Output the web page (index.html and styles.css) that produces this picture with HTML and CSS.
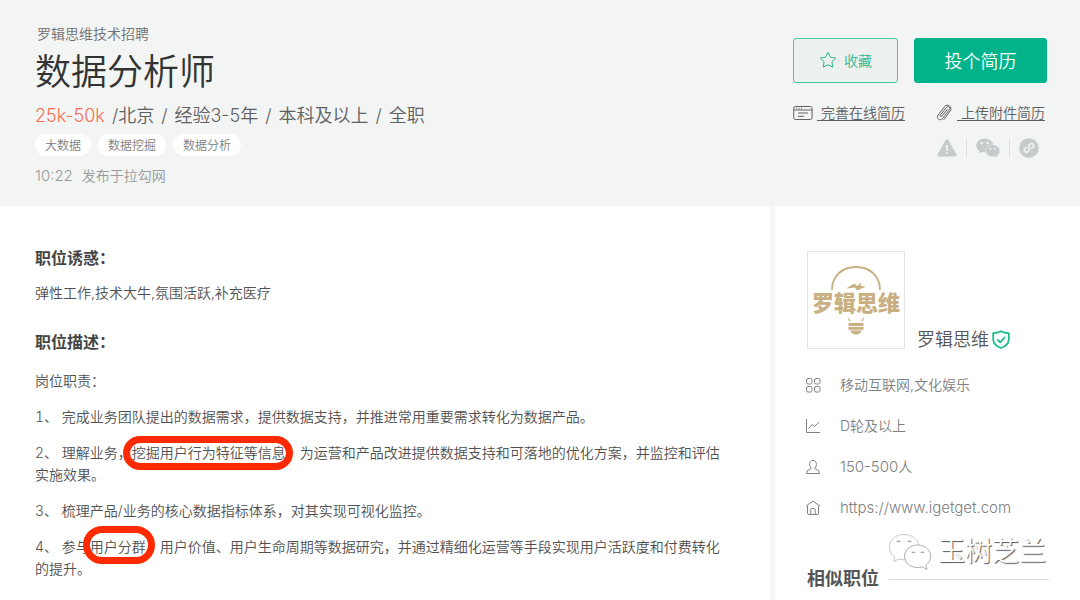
FILE: index.html
```html
<!DOCTYPE html>
<html lang="zh-CN">
<head>
<meta charset="utf-8">
<meta name="viewport" content="width=device-width, initial-scale=1">
<title>数据分析师</title>
<link rel="stylesheet" href="styles.css">
</head>
<body>
<header class="job-head">
  <div class="job-info">
    <div class="team">罗辑思维技术招聘</div>
    <h1 class="job-title">数据分析师</h1>
    <p class="job-meta"><span class="salary">25k-50k</span><span>/北京</span><span>/</span><span>经验3-5年</span><span>/</span><span>本科及以上</span><span>/</span><span>全职</span></p>
    <ul class="tags">
      <li class="tag">大数据</li>
      <li class="tag">数据挖掘</li>
      <li class="tag">数据分析</li>
    </ul>
    <p class="posted"><span class="latin">10:22</span><span>发布于拉勾网</span></p>
  </div>
  <div class="actions">
    <div class="action-row">
      <button type="button" class="btn btn-save">
        <svg class="star" width="18" height="18" viewBox="0 0 18 18" fill="none" stroke="currentColor" stroke-linejoin="round"><path d="M9 1.3 11.4 6.2 16.8 7 12.9 10.8 13.8 16.2 9 13.7 4.2 16.2 5.1 10.8 1.2 7 6.6 6.2Z"/></svg>
        收藏
      </button>
      <button type="button" class="btn btn-apply">投个简历</button>
    </div>
    <div class="action-row resume-row">
      <a class="resume-link" href="#">
        <svg width="20" height="16" viewBox="0 0 20 16" fill="none" stroke="currentColor"><rect x=".7" y="1.5" width="18.4" height="13" rx="1.8"/><path d="M1 5h18M3 3.3h1M5.500 3.300h1M8 3.300h1M5 8h10M5 11.300h6"/></svg>
        <span class="link-text">&nbsp;完善在线简历</span>
      </a>
      <a class="resume-link" href="#">
        <svg width="18" height="18" viewBox="0 0 18 18" fill="none" stroke="currentColor" stroke-linecap="round"><path d="M12.200 5.600 6.800 12.200C6 13.200 4.600 12.200 5.400 11.100L11.300 3.500C13 1.400 15.900 3.600 14.300 5.800L7.600 14.500C5.200 17.500.8 14.300 3 11.300L9.500 2.700C12.300-1 18 2.800 15.300 6.900L8.800 15.600"/></svg>
        <span class="link-text">&nbsp;上传附件简历</span>
      </a>
    </div>
    <div class="share">
      <svg width="20" height="20" viewBox="0 0 20 20"><path d="M8.500 2.200Q10 .3 11.500 2.200L19.300 16.300Q20 18.400 18 18.500H2Q0 18.400.7 16.300Z" fill="#c5cccb"/><path d="M10 7v6M10 14.300v1.800" stroke="#f2f5f4" stroke-width="1.600"/></svg>
      <span class="sep"></span>
      <svg width="24" height="20" viewBox="0 0 24 20"><path d="M8.700.5C4 .5.3 3.600.3 7.500c0 2.200 1.200 4.200 3.100 5.500L2.700 15.300 5.500 13.900c1 .3 2 .5 3.200.5 4.700 0 8.500-3.100 8.500-7S13.400.5 8.700.5Z" fill="#c5cccb"/><path d="M16.700 6.700c-4 0-7.200 2.700-7.200 6.100s3.200 6.100 7.200 6.100c.9 0 1.700-.1 2.500-.4l2.700 1.300-.7-2.200c1.600-1.100 2.600-2.800 2.600-4.800 0-3.400-3.100-6.100-7.100-6.100Z" fill="#c5cccb" stroke="#f2f5f4" stroke-width=".5"/><g fill="#f2f5f4"><circle cx="5.800" cy="5.300" r="1.200"/><circle cx="11.500" cy="5.300" r="1.200"/><circle cx="14.300" cy="11" r="1"/><circle cx="19" cy="11" r="1"/></g></svg>
      <span class="sep"></span>
      <svg width="20" height="20" viewBox="0 0 20 20"><circle cx="10" cy="10" r="9.800" fill="#c5cccb"/><path d="M7.800 9.700C5.900 10 4.900 11.200 5.200 12.600 5.600 14.300 7.800 14.700 9.100 13.500 9.800 12.900 10 12.200 10 11.300V8.500C10 7.400 10.300 6.600 11.200 6 12.700 5.100 14.500 5.700 14.800 7.300 15 8.700 14 9.900 12.200 10.300" fill="none" stroke="#f2f5f4" stroke-width="1.600" stroke-linecap="round"/></svg>
    </div>
  </div>
</header>
<div class="content">
  <main class="detail">
    <h2 class="section-title">职位诱惑：</h2>
    <p class="perks">弹性工作,技术大牛,氛围活跃,补充医疗</p>
    <h2 class="section-title section-desc">职位描述：</h2>
    <div class="desc">
      <p>岗位职责：</p>
      <p>1、 完成业务团队提出的数据需求，提供数据支持，并推进常用重要需求转化为数据产品。</p>
      <p>2、 理解业务，<span class="ring">挖掘用户行为特征等信息</span>，为运营和产品改进提供数据支持和可落地的优化方案，并监控和评估实施效果。</p>
      <p>3、 梳理产品/业务的核心数据指标体系，对其实现可视化监控。</p>
      <p>4、 参与<span class="ring ring-small">用户分群</span>、用户价值、用户生命周期等数据研究，并通过精细化运营等手段实现用户活跃度和付费转化的提升。</p>
    </div>
  </main>
  <aside class="company">
    <div class="brand">
      <div class="logo">
        <svg class="bulb-top" width="52" height="26" viewBox="0 0 52 26"><path d="M2 25C2 11 12 2 26 2s24 9 24 23" fill="none" stroke="#c8b083" stroke-width="1.800"/><path d="M16 23.500 24.500 18.500 27 21 31.500 17.500 30.500 21 36 21.500 27 25.500 25 22.500Z" fill="#c8b083"/></svg>
        <span class="logo-text">罗辑思维</span>
        <svg class="bulb-base" width="18" height="18" viewBox="0 0 18 18" fill="#c8b083"><path d="M1 0l3 4H1.800ZM17 0l-3 4h2.200ZM1.500 6h15v3h-15ZM1.500 10h15v2.800h-15ZM3 13.600h12Q13 17.500 9 17.500T3 13.600Z"/></svg>
      </div>
      <div class="brand-name">罗辑思维
        <svg width="18" height="19" viewBox="0 0 18 19" fill="none" stroke="#1abc8c" stroke-width="1.800" stroke-linejoin="round"><path d="M9 1.200Q12 3 16.800 3.200V9.500Q16.500 15.500 9 18 1.500 15.500 1.200 9.500V3.200Q6 3 9 1.200Z"/><path d="m5.300 9.300 2.800 3L13 7"/></svg>
      </div>
    </div>
    <ul class="facts">
      <li class="fact"><svg width="16" height="16" viewBox="0 0 16 16" fill="none" stroke="currentColor"><rect x="1.500" y="1.500" width="5.500" height="5.500" rx="1.500"/><rect x="9.500" y="1.500" width="5.500" height="5.500" rx="1.500"/><rect x="1.500" y="9.500" width="5.500" height="5.500" rx="1.500"/><rect x="9.500" y="9.500" width="5.500" height="5.500" rx="1.500"/></svg>移动互联网,文化娱乐</li>
      <li class="fact"><svg width="16" height="16" viewBox="0 0 16 16" fill="none" stroke="currentColor"><path d="M1.500 1v13.500H15M3.500 10.500 7 6.500l2.500 2 4.500-4.500"/></svg>D轮及以上</li>
      <li class="fact"><svg width="16" height="16" viewBox="0 0 16 16" fill="none" stroke="currentColor" stroke-linejoin="round"><path d="M6.300 9C3.700 7.200 3.800 1.500 8 1.500S12.300 7.200 9.700 9Q10 10.300 12 10.700 14.500 11.300 14.500 14.500h-13Q1.500 11.300 4 10.700 6 10.300 6.300 9Z"/></svg><span><span class="latin">150-500</span>人</span></li>
      <li class="fact"><svg width="16" height="16" viewBox="0 0 16 16" fill="none" stroke="currentColor" stroke-linejoin="round"><path d="M1 6 8 1.200 15 6M2.500 6v7q0 1.500 1.500 1.500h8q1.500 0 1.500-1.500V6M5.800 14.500V9.200q0-.7.700-.7h3q.7 0 .7.700v5.300"/></svg><span class="latin">https://www.igetget.com</span></li>
    </ul>
    <h2 class="similar">相似职位</h2>
    <div class="watermark">
      <svg width="44" height="38" viewBox="0 0 44 38" fill="#fff" stroke="#999" stroke-width=".8"><path d="M16 1.500C7.500 1.500 1.500 7 1.500 14c0 4.500 2 8 5.500 10.500L5.500 28.500l5.500-2.500c2 .6 4 .9 6 .7 8-.5 14-5.500 14-12.500C31 7 24.500 1.500 16 1.500Z" stroke-opacity=".65"/><path d="M29.500 12C22 12 16.500 17 16.500 23.200S22 34.500 29.500 34.500c1.700 0 3-.2 4.500-.7l5 2.700-1.200-4c3-2 4.900-5.500 4.900-9.300C42.700 17 37 12 29.500 12Z"/><path d="M9 9q1.500-2 3 0M20 9q1.500-2 3 0M24 20q1.500-2 3 0M33 20q1.500-2 3 0" fill="none" stroke-width="1.200"/></svg>
      <span>玉树芝兰</span>
    </div>
  </aside>
</div>
</body>
</html>
```

FILE: styles.css
```css
* { box-sizing: border-box; }

body {
  margin: 0;
  min-height: 100vh;
  display: flex;
  flex-direction: column;
  background: #fff;
  color: #505050;
  font: 350 14px/22px Inter, "Noto Sans CJK SC", sans-serif;
}

h1, h2, p, ul { margin: 0; padding: 0; }
ul { list-style: none; }
svg { display: block; flex: none; }
.latin { font-size: 15px; }

.job-head {
  display: flex;
  justify-content: space-between;
  padding: 24px 33px 20px 35px;
  background: #f2f5f4;
}

.team { line-height: 20px; padding-left: 2px; color: #707070; }
.job-title {
  margin-top: 6px;
  font-size: 36px;
  line-height: 44px;
  font-weight: 350;
  color: #333;
}
.job-meta {
  display: flex;
  gap: 7px;
  margin-top: 10px;
  font-size: 18px;
  line-height: 24px;
  color: #606060;
}
.salary { color: #fd6b4f; }

.tags { display: flex; gap: 7px; margin-top: 6px; }
.tag {
  padding: 1px 10px 0;
  border-radius: 11px;
  background: #fff;
  color: #808080;
  font-size: 12px;
  line-height: 21px;
}
.posted { display: flex; gap: 9px; margin-top: 10px; line-height: 20px; color: #999; }

.actions { width: 254px; padding-top: 14px; }
.action-row { display: flex; justify-content: space-between; }
.btn {
  display: flex;
  align-items: center;
  justify-content: center;
  height: 45px;
  padding: 0 0 2px;
  border: 1px solid #00b38a;
  border-radius: 3px;
  font-family: inherit;
  font-weight: 350;
}
.btn-save {
  gap: 7px;
  width: 105px;
  border-color: #4bc5a2;
  background: #ecf0ee;
  color: #2db892;
  font-size: 14px;
}
.btn-apply { width: 133px; background: #00b38a; color: #fff; font-size: 18px; }

.resume-row { margin-top: 19px; padding-right: 2px; }
.resume-link {
  display: flex;
  align-items: center;
  gap: 4px;
  color: #606060;
  text-decoration: none;
}
.link-text { text-decoration: underline; text-underline-offset: 2px; }

.share {
  display: flex;
  align-items: center;
  justify-content: flex-end;
  gap: 9px;
  margin-top: 14px;
  padding-right: 8px;
}
.sep { width: 1px; height: 20px; background: #dde2e1; }

.content { display: flex; flex: 1; }
.detail { flex: 1; padding: 41px 47px 20px 35px; }
.section-title { font-size: 16px; line-height: 22px; font-weight: 700; color: #444; }
.perks { margin-top: 13px; }
.section-desc { margin: 27px 0 17px; }
.desc { display: grid; gap: 14px; font-variant-numeric: tabular-nums; }

.ring { position: relative; }
.ring::after {
  content: "";
  position: absolute;
  inset: -8px -7px -9px -9px;
  border: 7px solid #ff2a00;
  border-radius: 18px;
}
.ring-small::after { inset: -12px -9px -9px -7px; border-radius: 20px; }

.company {
  position: relative;
  width: 310px;
  padding: 45px 31px 0 32px;
  border-left: 5px solid #f6f7f7;
}
.brand { display: flex; align-items: flex-end; gap: 12px; }
.logo {
  display: flex;
  flex-direction: column;
  align-items: center;
  width: 98px;
  height: 98px;
  padding-top: 13px;
  border: 1px solid #e6e6e6;
}
.logo-text { font-size: 22px; line-height: 24px; font-weight: 900; color: #c8b083; }
.bulb-base { margin-top: 2px; }
.brand-name {
  display: flex;
  align-items: center;
  gap: 3px;
  font-size: 18px;
  line-height: 16px;
  color: #555;
}

.facts { display: grid; gap: 19px; margin-top: 25px; color: #808080; }
.fact { display: flex; align-items: center; gap: 19px; }
.fact svg { margin-left: -2px; }

.similar {
  display: flex;
  align-items: center;
  gap: 10px;
  margin-top: 49px;
  font-size: 18px;
  font-weight: 700;
  color: #555;
}
.similar::after { content: ""; flex: 1; height: 1px; background: #ddd; }

.watermark {
  position: absolute;
  top: 326px;
  right: 34px;
  display: flex;
  align-items: center;
  gap: 6px;
  color: #fff;
  font-size: 27px;
  line-height: 40px;
  text-shadow: 1px 1px 1px #555;
}
```
